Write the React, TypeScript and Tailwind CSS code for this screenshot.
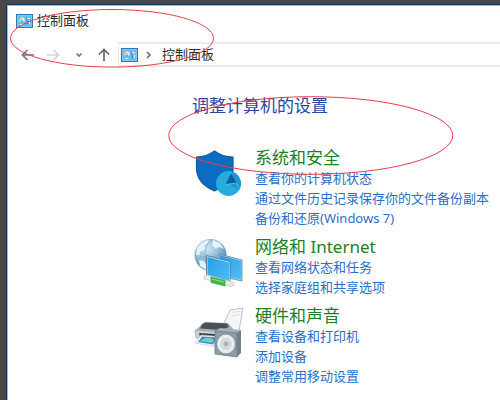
import type { ReactNode } from "react";

interface CategoryProps {
  icon: ReactNode;
  title: string;
  links: string[];
}

function PanelIcon() {
  return (
    <svg className="h-[14px] w-[17px] shrink-0" viewBox="0 0 17 14" aria-hidden="true">
      <rect x="0.5" y="0.5" width="16" height="13" fill="#62bdf0" stroke="#2f78b4" />
      <rect x="1.5" y="1.5" width="14" height="11" fill="none" stroke="#7cc8f3" />
      <circle cx="6" cy="6" r="2.8" fill="#d3eefc" />
      <path d="M6 6V3.2A2.8 2.8 0 0 0 3.2 6Z" fill="#f0c552" />
      <path d="M6 6l2 2A2.8 2.8 0 0 1 3.8 7.8Z" fill="#6aa9d6" />
      <path d="M11 4.5h3M3.5 10.5h4" stroke="#d9f2fd" />
      <path d="M10.5 4v3M11.5 7v3.5" stroke="#3b8bca" />
      <path d="M13.5 6.5v4" stroke="#d9f2fd" />
    </svg>
  );
}

function ShieldIcon() {
  return (
    <svg className="h-[50px] w-[50px]" viewBox="0 0 50 50" aria-hidden="true">
      <path
        d="M2.5 8C9 8 15 6 20.500 2 26 6 32 8 39 8V22C39 32 32 37 20.500 42 9 37 2.500 30 2.500 19Z"
        fill="#0b6cc4"
        stroke="#155a96"
        strokeWidth="1.2"
      />
      <circle cx="34.5" cy="34.5" r="12.5" fill="#27ace0" />
      <path d="M34.5 34.5L39 23A12.5 12.5 0 0 1 45 41Z" fill="#2295cf" />
      <path d="M37 24.5L42.5 34 31.5 35.5Z" fill="#0a5da6" />
      <path d="M31.5 35.5l11-1.5 3 7" fill="none" stroke="#5fc6ec" strokeWidth="0.8" />
    </svg>
  );
}

function NetworkIcon() {
  return (
    <svg className="h-[50px] w-[50px]" viewBox="0 0 50 50" aria-hidden="true">
      <defs>
        <radialGradient id="globe" cx="0.4" cy="0.3" r="0.75">
          <stop offset="0" stopColor="#cfe6f2" />
          <stop offset="0.6" stopColor="#7fb0d0" />
          <stop offset="1" stopColor="#457fa8" />
        </radialGradient>
        <linearGradient id="screen" x1="0" y1="0" x2="1" y2="1">
          <stop offset="0" stopColor="#25a0ea" />
          <stop offset="1" stopColor="#4fbcf8" />
        </linearGradient>
      </defs>
      <circle cx="16.5" cy="17" r="16" fill="url(#globe)" />
      <path
        d="M3 10c3-5 8-8 13-8l-2 4-4 1 1 4-5 3-1 5-3-2ZM19 2l7 3 4 6-5-2-3 2-4-4ZM5 22l5 1 3 4-1 5-6-4Z"
        fill="#e8f2f4"
      />
      <path d="M1 17q15 5 31-2M16 1q-9 14-2 31" fill="none" stroke="#6da2c2" strokeWidth="0.6" />
      <path d="M25 16L48 22V43L25 38Z" fill="#b9d3e0" stroke="#5b7f93" strokeWidth="0.8" />
      <path d="M26 17L47 23V41.500L26 37Z" fill="url(#screen)" />
      <path d="M12.5 17.5L36 23.5V44.5L12.5 39.5Z" fill="#cfe3ec" stroke="#4d7084" strokeWidth="0.8" />
      <path d="M13.5 19L35 24.5V43L13.5 38.5Z" fill="url(#screen)" />
      <path d="M10 37.5l4-0.5 26 7.5v3.5l-4 0.5-26-7.5Z" fill="#e4e9e9" stroke="#b8c2c2" strokeWidth="0.5" />
      <path d="M17 39l14 3.5v5.5L17 44.5Z" fill="#42b947" stroke="#2c9442" strokeWidth="0.6" />
      <path d="M18 41l12 3" stroke="#91dd83" />
    </svg>
  );
}

function PrinterIcon() {
  return (
    <svg className="h-[52px] w-[50px]" viewBox="0 0 50 52" aria-hidden="true">
      <path d="M30 16L36 3 49 1 45 24 38 26Z" fill="#f4f6f7" stroke="#aeb5ba" strokeWidth="0.8" />
      <path d="M38 5.5l9-1.5M37 9l9-1.5" stroke="#dfe4e6" />
      <path d="M1 24L10 15 34 16 40 23 34 30 3 29Z" fill="#a9afb3" />
      <path d="M8 17.5L12 15.5 33 16.5 35 20 28 23 6 21.5Z" fill="#4a5157" />
      <path d="M1 23l30 2v8L2 31Z" fill="#ced3d5" stroke="#8a9296" strokeWidth="0.6" />
      <path d="M5 26l22 1.5v4.5L6 30Z" fill="#343d44" />
      <path d="M7 28l18 1.5L20 39.5 1 36Z" fill="#f2f5f6" stroke="#bac3c7" strokeWidth="0.6" />
      <path d="M8 29.5l15 1-4 7L4 35Z" fill="#2b93d3" />
      <path d="M9 32q6-3 11 1l-2 3-12-2Z" fill="#7cc9c0" />
      <path d="M21 24L26 21 47 23 44 27Z" fill="#a5b0b8" />
      <path d="M21 24L43 26V50L21 47Z" fill="#909da7" stroke="#6d7c86" strokeWidth="0.8" />
      <path d="M43 26l4-3v23l-4 4Z" fill="#6f808b" />
      <ellipse cx="32" cy="37" rx="9.5" ry="10" fill="#e5eaed" stroke="#75838c" strokeWidth="0.8" />
      <ellipse cx="32" cy="37" rx="6.5" ry="7" fill="#d2dade" stroke="#f9fbfc" />
      <circle cx="32" cy="37" r="2.4" fill="#a9b5bd" />
    </svg>
  );
}

function NavIcon({ d, color, label }: { d: string; color: string; label: string }) {
  return (
    <button type="button" aria-label={label} className={color}>
      <svg className="h-4 w-4" viewBox="0 0 16 16" fill="none" stroke="currentColor" strokeWidth="1.7">
        <path d={d} />
      </svg>
    </button>
  );
}

function Category({ icon, title, links }: CategoryProps) {
  return (
    <section className="flex gap-[11px]">
      <div className="w-[50px] shrink-0 pt-px">{icon}</div>
      <div className="flex flex-col items-start whitespace-nowrap">
        <h2 className="text-[17px] leading-5 text-[#1e7e24]">
          <a href="#">{title}</a>
        </h2>
        {links.map((link) => (
          <a key={link} href="#" className="text-[13px] leading-5 text-[#2a6fc9]">
            {link}
          </a>
        ))}
      </div>
    </section>
  );
}

const categories: CategoryProps[] = [
  {
    icon: <ShieldIcon />,
    title: "系统和安全",
    links: ["查看你的计算机状态", "通过文件历史记录保存你的文件备份副本", "备份和还原(Windows 7)"],
  },
  {
    icon: <NetworkIcon />,
    title: "网络和 Internet",
    links: ["查看网络状态和任务", "选择家庭组和共享选项"],
  },
  {
    icon: <PrinterIcon />,
    title: "硬件和声音",
    links: ["查看设备和打印机", "添加设备", "调整常用移动设置"],
  },
];

export default function App() {
  return (
    <div className="relative min-h-screen overflow-hidden bg-[#474747] pt-1 pl-1.5 font-['Noto_Sans','Noto_Sans_CJK_SC',sans-serif]">
      <div className="min-h-screen border-t border-l border-[#12365f] bg-white">
        <div className="min-h-screen border-t border-l border-[#86bff0]">
          <header className="flex h-[30px] items-center gap-1 pl-2 text-[13px] text-[#2b2b2b]">
            <PanelIcon />
            <h1>控制面板</h1>
          </header>

          <nav className="mt-1.5 flex h-[25px] items-center">
            <div className="flex w-[110px] shrink-0 items-center justify-between pr-1.5 pl-3">
              <NavIcon label="后退" color="text-[#777777]" d="M14 8H2.5M7.5 3L2.5 8l5 5" />
              <NavIcon label="前进" color="text-[#d5d5d5]" d="M2 8h11.5M8.5 3l5 5-5 5" />
              <NavIcon label="最近" color="text-[#777777]" d="M5.5 6.5L8 9l2.5-2.5" />
              <NavIcon label="向上" color="text-[#686868]" d="M8 14V2.5M3 7.5l5-5 5 5" />
            </div>
            <div className="flex h-full grow items-center border-y-2 border-l border-[#ebebeb] pl-0.5 text-[13px] text-[#2b2b2b]">
              <PanelIcon />
              <svg className="mx-0.5 h-4 w-4" viewBox="0 0 16 16" fill="none" stroke="#666666" strokeWidth="1.5">
                <path d="M7 5l3 3-3 3" />
              </svg>
              <span className="ml-1">控制面板</span>
            </div>
          </nav>

          <main className="pt-[27px] pl-[184px]">
            <h2 className="text-[17px] leading-6 text-[#29479f]">调整计算机的设置</h2>
            <div className="mt-[30px] flex flex-col gap-[9px] pl-0.5">
              {categories.map((category) => (
                <Category key={category.title} {...category} />
              ))}
            </div>
          </main>
        </div>
      </div>

      {/* hand-drawn style highlights */}
      <svg
        className="pointer-events-none absolute top-0 left-0 h-[400px] w-[500px]"
        viewBox="0 0 500 400"
        fill="none"
        stroke="#e5404c"
        aria-hidden="true"
      >
        <ellipse cx="112" cy="38.3" rx="101.5" ry="28.8" />
        <ellipse cx="310.7" cy="135.5" rx="142" ry="38.8" />
      </svg>
    </div>
  );
}
